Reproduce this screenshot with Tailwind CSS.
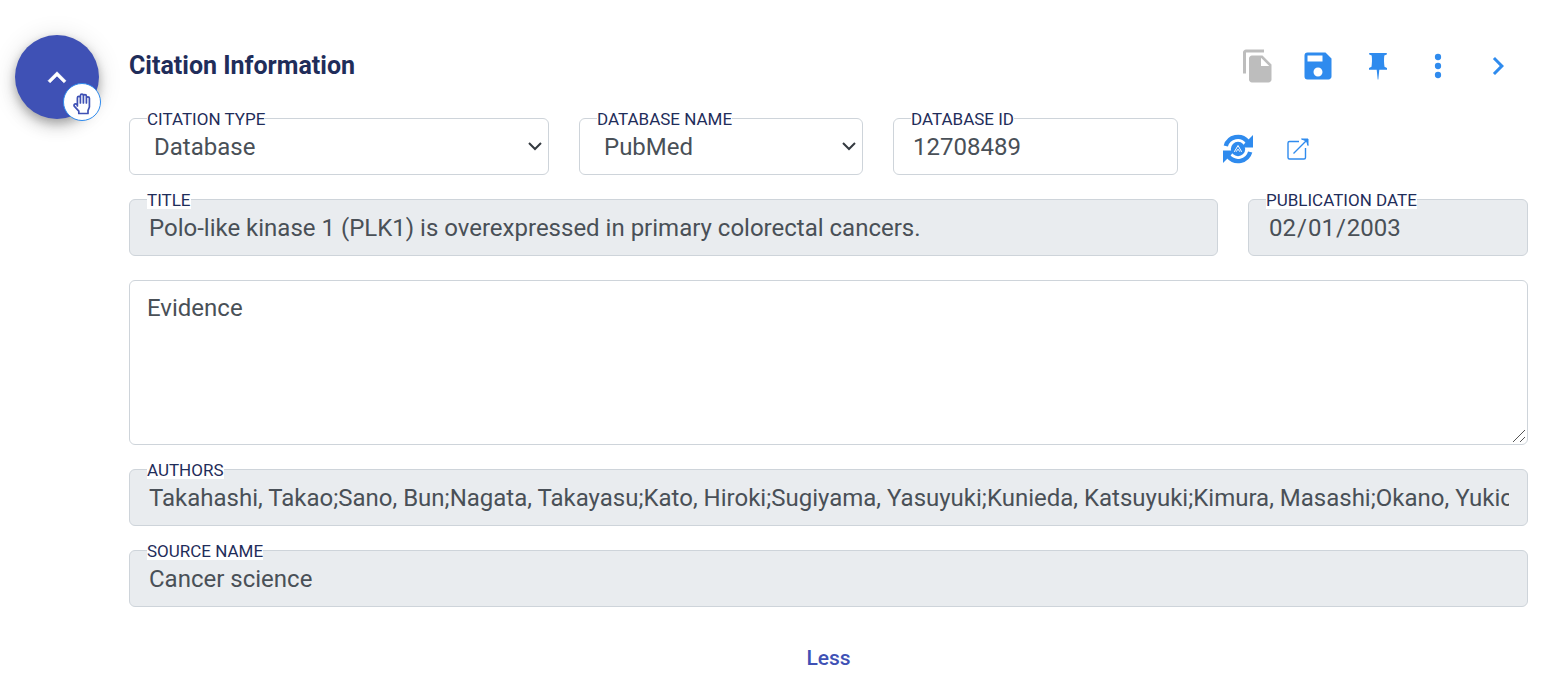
<!DOCTYPE html>
<html lang="en">
<head>
<meta charset="utf-8">
<meta name="viewport" content="width=device-width, initial-scale=1">
<title>Citation Information</title>
<script src="https://cdn.jsdelivr.net/npm/@tailwindcss/browser@4"></script>
</head>
<body class="bg-white font-[Roboto,sans-serif] text-2xl text-[#495057]">
<main class="flex gap-[30px] pt-[35px] pr-5 pl-[15px]">
  <div class="relative size-[84px] shrink-0">
    <button type="button" aria-label="Collapse" class="flex size-full items-center justify-center rounded-full bg-[#3f51b5] text-white shadow-[0_4px_8px_rgba(0,0,0,0.2),0_8px_15px_rgba(0,0,0,0.14),0_2px_26px_rgba(0,0,0,0.12)]">
      <svg class="size-9" viewBox="0 0 24 24" fill="currentColor" stroke="currentColor" stroke-width="0.4" stroke-linejoin="round"><path d="M12 8.500l-6 6 1.410 1.410L12 11.330l4.590 4.580L18 14.500z"/></svg>
    </button>
    <button type="button" aria-label="Drag" class="absolute -right-0.5 -bottom-0.5 flex size-[38px] items-center justify-center rounded-full border border-[#2f8bee] bg-white text-[#3f51b5]">
      <svg class="mt-1 size-6" viewBox="0 0 24 24" fill="none" stroke="currentColor" stroke-width="1.700" stroke-linecap="round" stroke-linejoin="round"><path d="M7.400 14V5.800a1.500 1.500 0 0 1 3 0V11M10.400 11V3.700a1.500 1.500 0 0 1 3 0V11M13.400 11V4.200a1.500 1.500 0 0 1 3 0V11M16.400 11V6.300a1.500 1.500 0 0 1 3 0V15l-1.400 3.600V21.500H8.800v-2.300L4.200 14.200a1.500 1.500 0 0 1 2-2.100l1.200 1"/></svg>
    </button>
  </div>

  <form class="flex min-w-0 flex-1 flex-col">
    <header class="flex h-[62px] items-center justify-between">
      <h1 class="text-[25px] font-bold text-[#1f2d5a]">Citation Information</h1>
      <div class="flex text-[#2f8bee]">
        <button type="button" aria-label="Copy" disabled class="flex size-[60px] items-center justify-center text-[#bdbdbd]">
          <svg class="size-9" viewBox="0 0 24 24" fill="currentColor"><path d="M16 1H4c-1.100 0-2 .9-2 2v14h2V3h12V1zm-1 4l6 6v10c0 1.100-.9 2-2 2H7.990C6.890 23 6 22.100 6 21l.01-14c0-1.100.89-2 1.990-2h7zm-1 7h5.500L14 6.500V12z"/></svg>
        </button>
        <button type="button" aria-label="Save" class="flex size-[60px] items-center justify-center">
          <svg class="size-9" viewBox="0 0 24 24" fill="currentColor"><path d="M17 3H5a2 2 0 0 0-2 2v14a2 2 0 0 0 2 2h14c1.100 0 2-.9 2-2V7l-4-4zm-5 16c-1.660 0-3-1.340-3-3s1.340-3 3-3 3 1.340 3 3-1.340 3-3 3zm3-10H5V5h10v4z"/></svg>
        </button>
        <button type="button" aria-label="Pin" class="flex size-[60px] items-center justify-center">
          <svg class="h-7 w-5" viewBox="0 0 20 28" fill="currentColor"><path d="M1.200 1h17.600v1.500L16.300 3.600c-.5 4-.3 7.500.2 11.200l2.500 1.200v1.800h-7.700L10.300 27.500h-.6L8.700 17.800H1V16l2.500-1.200c.5-3.700.7-7.200.2-11.200L1.200 2.500z"/></svg>
        </button>
        <button type="button" aria-label="More actions" class="flex size-[60px] items-center justify-center">
          <svg class="size-9" viewBox="0 0 24 24" fill="currentColor"><circle cx="12" cy="6" r="2.100"/><circle cx="12" cy="12" r="2.100"/><circle cx="12" cy="18" r="2.100"/></svg>
        </button>
        <button type="button" aria-label="Next" class="flex size-[60px] items-center justify-center">
          <svg class="size-9" viewBox="0 0 24 24" fill="currentColor"><path d="M10 6L8.590 7.410 13.170 12l-4.580 4.590L10 18l6-6z"/></svg>
        </button>
      </div>
    </header>

    <div class="mt-[21px] grid grid-cols-[420fr_284fr_285fr_320fr] gap-[30px]">
      <div class="relative">
        <label for="type" class="absolute -top-2 left-[18px] bg-white text-[17px] leading-[18px] text-[#1f2d5a]">CITATION TYPE</label>
        <select id="type" class="h-[57px] w-full appearance-none rounded-md border border-[#ced4da] bg-white pr-10 pl-6 text-[#495057]"><option>Database</option></select>
        <svg class="pointer-events-none absolute top-[23px] right-1.5 h-3 w-4" viewBox="0 0 16 12" fill="none" stroke="#343a40" stroke-width="2"><path d="M2 2l6 6 6-6"/></svg>
      </div>
      <div class="relative">
        <label for="db" class="absolute -top-2 left-[18px] bg-white text-[17px] leading-[18px] text-[#1f2d5a]">DATABASE NAME</label>
        <select id="db" class="h-[57px] w-full appearance-none rounded-md border border-[#ced4da] bg-white pr-10 pl-6 text-[#495057]"><option>PubMed</option></select>
        <svg class="pointer-events-none absolute top-[23px] right-1.5 h-3 w-4" viewBox="0 0 16 12" fill="none" stroke="#343a40" stroke-width="2"><path d="M2 2l6 6 6-6"/></svg>
      </div>
      <div class="relative">
        <label for="dbid" class="absolute -top-2 left-[18px] bg-white text-[17px] leading-[18px] text-[#1f2d5a]">DATABASE ID</label>
        <input id="dbid" type="text" value="12708489" class="h-[57px] w-full rounded-md border border-[#ced4da] bg-white pr-[18px] pl-[19px]">
      </div>
      <div class="flex items-center pt-1 text-[#2f8bee]">
        <button type="button" aria-label="Refresh citation" class="flex h-[53px] w-[60px] items-center justify-center">
          <svg class="size-[30px]" viewBox="0 0 30 30" fill="none"><path d="M2.800 12A12.500 12.500 0 0 1 24.500 7.500M27.200 18A12.500 12.500 0 0 1 5.500 22.500" stroke="currentColor" stroke-width="4.400"/><circle cx="15" cy="15" r="7.200" fill="currentColor"/><path d="M18.500 13.500H30V1L22 9z" fill="currentColor"/><path d="M11.500 16.500H0V29l8-8z" fill="currentColor"/><path d="M11.300 17.800L15 11.500l3.700 6.300M13 17.800l2-2.600 2 2.600" stroke="white" stroke-width="1"/></svg>
        </button>
        <a href="#" aria-label="Open in new window" class="flex h-[53px] w-[60px] items-center justify-center">
          <svg class="size-[22px]" viewBox="0 0 22 22" fill="none" stroke="currentColor" stroke-width="1.400"><path d="M12 3.500H2.500a1.500 1.500 0 0 0-1.500 1.500v14.500A1.500 1.500 0 0 0 2.500 21H17a1.500 1.500 0 0 0 1.500-1.500V10M6.500 15.500L20 2"/><path d="M14.500 1H21v6.500L19.500 3z" fill="currentColor" stroke-width="1"/></svg>
        </a>
      </div>
    </div>

    <div class="mt-6 grid grid-cols-[1089fr_280fr] gap-[30px]">
      <div class="relative">
        <label for="title" class="absolute -top-2 left-[18px] bg-white text-[17px] leading-[18px] text-[#1f2d5a]">TITLE</label>
        <input id="title" type="text" readonly value="Polo-like kinase 1 (PLK1) is overexpressed in primary colorectal cancers." class="h-[57px] w-full rounded-md border border-[#ced4da] bg-[#e9ecef] pr-[18px] pl-[19px]">
      </div>
      <div class="relative">
        <label for="date" class="absolute -top-2 left-[18px] bg-white text-[17px] leading-[18px] text-[#1f2d5a]">PUBLICATION DATE</label>
        <input id="date" type="date" readonly value="2003-02-01" class="h-[57px] w-full rounded-md border border-[#ced4da] bg-[#e9ecef] pr-[18px] pl-[19px] [&::-webkit-calendar-picker-indicator]:hidden">
      </div>
    </div>

    <div class="relative mt-6 flex">
      <textarea aria-label="Evidence" placeholder="Evidence" class="h-[165px] w-full rounded-md border border-[#ced4da] bg-white px-[17px] py-[9px] leading-9 placeholder:text-[#495057] [&::-webkit-resizer]:bg-transparent"></textarea>
      <svg class="pointer-events-none absolute right-0.5 bottom-0.5 size-3.5" viewBox="0 0 14 14" fill="none" stroke="#555" stroke-width="1"><path d="M1 13L13 1M8 13l5-5"/></svg>
    </div>

    <div class="relative mt-6">
      <label for="authors" class="absolute -top-2 left-[18px] bg-white text-[17px] leading-[18px] text-[#1f2d5a]">AUTHORS</label>
      <input id="authors" type="text" readonly value="Takahashi, Takao;Sano, Bun;Nagata, Takayasu;Kato, Hiroki;Sugiyama, Yasuyuki;Kunieda, Katsuyuki;Kimura, Masashi;Okano, Yukio;Saji, Shigetoyo" class="h-[57px] w-full rounded-md border border-[#ced4da] bg-[#e9ecef] pr-[18px] pl-[19px]">
    </div>

    <div class="relative mt-6">
      <label for="source" class="absolute -top-2 left-[18px] bg-white text-[17px] leading-[18px] text-[#1f2d5a]">SOURCE NAME</label>
      <input id="source" type="text" readonly value="Cancer science" class="h-[57px] w-full rounded-md border border-[#ced4da] bg-[#e9ecef] pr-[18px] pl-[19px]">
    </div>

    <button type="button" class="mt-6 h-[54px] self-center px-6 text-[21px] font-medium text-[#3f51b5]">Less</button>
  </form>
</main>
</body>
</html>
